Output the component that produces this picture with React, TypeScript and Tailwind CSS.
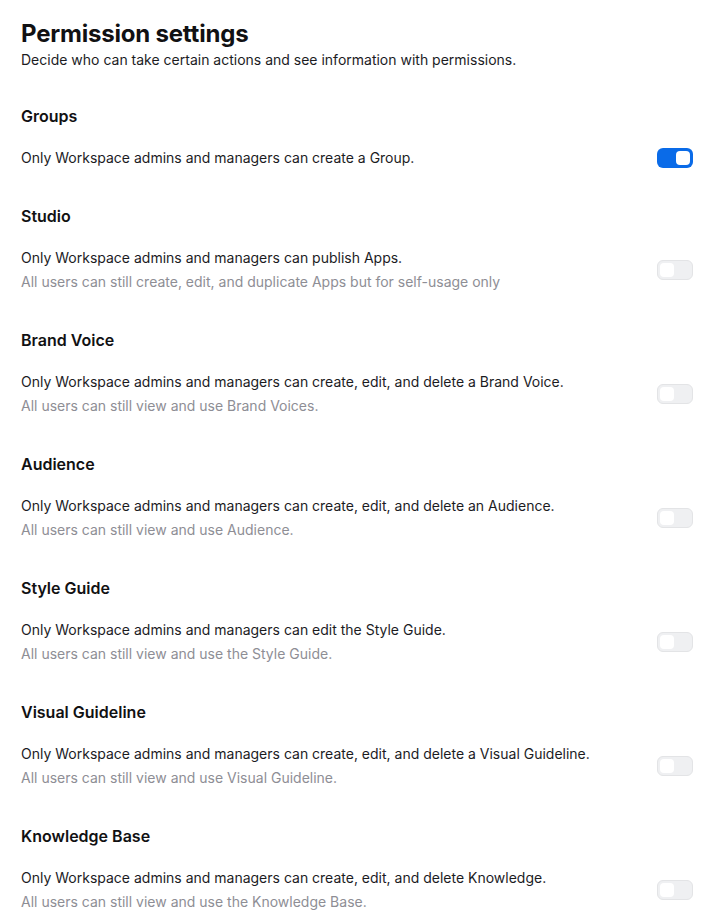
import React from "react";

type Item = { title: string; line1: string; line2?: string; on?: boolean };

const items: Item[] = [
  { title: "Groups", line1: "Only Workspace admins and managers can create a Group.", on: true },
  {
    title: "Studio",
    line1: "Only Workspace admins and managers can publish Apps.",
    line2: "All users can still create, edit, and duplicate Apps but for self-usage only",
  },
  {
    title: "Brand Voice",
    line1: "Only Workspace admins and managers can create, edit, and delete a Brand Voice.",
    line2: "All users can still view and use Brand Voices.",
  },
  {
    title: "Audience",
    line1: "Only Workspace admins and managers can create, edit, and delete an Audience.",
    line2: "All users can still view and use Audience.",
  },
  {
    title: "Style Guide",
    line1: "Only Workspace admins and managers can edit the Style Guide.",
    line2: "All users can still view and use the Style Guide.",
  },
  {
    title: "Visual Guideline",
    line1: "Only Workspace admins and managers can create, edit, and delete a Visual Guideline.",
    line2: "All users can still view and use Visual Guideline.",
  },
  {
    title: "Knowledge Base",
    line1: "Only Workspace admins and managers can create, edit, and delete Knowledge.",
    line2: "All users can still view and use the Knowledge Base.",
  },
];

function Toggle({ on }: { on?: boolean }) {
  return on ? (
    <div className="flex h-[20px] w-[36px] shrink-0 items-center justify-end rounded-[6px] bg-[#0a6be8] px-[3px]">
      <div className="h-[14px] w-[14px] rounded-[4px] bg-white" />
    </div>
  ) : (
    <div className="flex h-[20px] w-[36px] shrink-0 items-center justify-start rounded-[6px] border border-[#e3e4e6] bg-[#eff0f2] px-[2px]">
      <div className="h-[14px] w-[14px] rounded-[4px] bg-white" />
    </div>
  );
}

export default function App() {
  return (
    <div
      className="min-h-screen bg-white pl-[21px] pr-[19px] pt-[18px] text-[#111113]"
      style={{ fontFamily: "Inter, 'Noto Sans', sans-serif" }}
    >
      <h1 className="text-[24px] font-bold leading-[32px] tracking-[-0.2px]">Permission settings</h1>
      <p className="text-[14px] leading-[20px] text-[#1c1c1f]">
        Decide who can take certain actions and see information with permissions.
      </p>
      {items.map((it) => (
        <div key={it.title} className="pt-[34px]">
          <h2 className="text-[16px] font-semibold leading-[24px]">{it.title}</h2>
          <div className="mt-[18px] flex items-center justify-between gap-4">
            <div className="text-[14px] leading-[24px]">
              <div className="text-[#1c1c1f]">{it.line1}</div>
              {it.line2 && <div className="text-[#8e8e95]">{it.line2}</div>}
            </div>
            <Toggle on={it.on} />
          </div>
        </div>
      ))}
    </div>
  );
}
